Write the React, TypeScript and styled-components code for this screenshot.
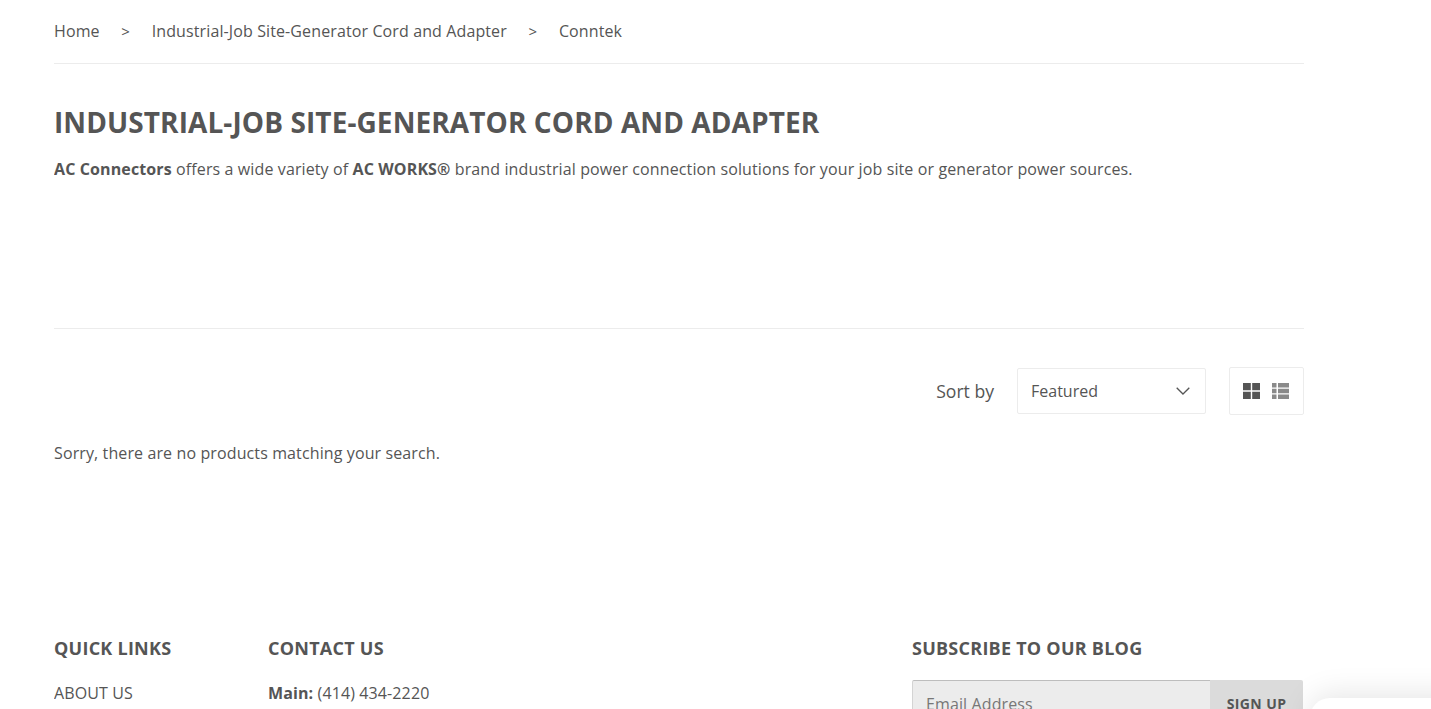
import React from "react";
import styled, { createGlobalStyle } from "styled-components";

const Global = createGlobalStyle`
  html, body { margin: 0; padding: 0; height: 709px; overflow: hidden; background: #fff; }
  body { font-family: "Open Sans", "Liberation Sans", sans-serif; font-size: 16px; line-height: 24px; color: #555; letter-spacing: 0.115px; }
`;
const Page = styled.div`
  width: 1250px;
  margin-left: 54px;
  height: 709px;
  overflow: hidden;
`;
const Breadcrumb = styled.nav`
  display: flex;
  align-items: center;
  height: 62px;
  padding-bottom: 1px;
  border-bottom: 1px solid #ececec;
`;
const Crumb = styled.span`
  color: #555;
  white-space: nowrap;
`;
const Sep = styled.span`
  width: 52px;
  text-align: center;
  font-size: 15px;
  line-height: 24px;
  color: #555;
`;
const Title = styled.h1`
  margin: 41px 0 0;
  font-size: 28px;
  line-height: 34px;
  font-weight: 700;
  letter-spacing: 0.09px;
  text-transform: uppercase;
  color: #555;
`;
const Desc = styled.p`
  margin: 18px 0 0;
  height: 147px;
  padding-bottom: 24px;
  border-bottom: 1px solid #ececec;
  b { font-weight: 700; }
`;
const Toolbar = styled.div`
  display: flex;
  justify-content: flex-end;
  align-items: center;
  margin-top: 38px;
  height: 48px;
`;
const SortLabel = styled.span`
  font-size: 17.6px;
  letter-spacing: 0;
  margin-right: 23px;
`;
const Select = styled.div`
  display: flex;
  align-items: center;
  justify-content: space-between;
  width: 189px;
  height: 46px;
  box-sizing: border-box;
  padding: 0 15px 0 13px;
  border: 1px solid #ececec;
  border-radius: 2px;
  margin-right: 23px;
  letter-spacing: 0;
`;
const Toggle = styled.div`
  display: flex;
  align-items: center;
  justify-content: center;
  gap: 12px;
  width: 75px;
  height: 48px;
  box-sizing: border-box;
  padding-right: 1px;
  border: 1px solid #ececec;
  border-radius: 2px;
`;
const Empty = styled.p`
  margin: 26px 0 0;
`;
const Footer = styled.footer`
  display: flex;
  margin-top: 171px;
`;
const LinksCol = styled.div`
  width: 214px;
`;
const ContactCol = styled.div`
  width: 644px;
`;
const SubscribeCol = styled.div`
  width: 391px;
`;
const FootTitle = styled.h4`
  margin: 0 0 21px;
  font-size: 18px;
  line-height: 24px;
  font-weight: 700;
  text-transform: uppercase;
  letter-spacing: 0.25px;
  color: #555;
`;
const FootItem = styled.div`
  b { font-weight: 700; }
`;
const Form = styled.div`
  display: flex;
  height: 48px;
  margin-top: -1px;
`;
const Input = styled.div`
  flex: 1;
  box-sizing: border-box;
  background: #ececec;
  border: 1px solid #d4d4d4;
  border-top-color: #bdbdbd;
  border-radius: 2px 0 0 2px;
  border-right: none;
  padding: 11px 13px;
  color: #777;
`;
const SignUp = styled.div`
  width: 93px;
  box-sizing: border-box;
  background: #dbdbdb;
  border-radius: 0 2px 2px 0;
  padding-top: 12px;
  text-align: center;
  font-weight: 700;
  font-size: 14px;
  letter-spacing: 0.4px;
  color: #555;
`;
const Popup = styled.div`
  position: fixed;
  left: 1310px;
  top: 698px;
  width: 160px;
  height: 80px;
  background: #fff;
  border-radius: 20px;
  box-shadow: 0 -4px 30px rgba(0, 0, 0, 0.1);
`;

export default function App() {
  return (
    <>
      <Global />
      <Page>
        <Breadcrumb>
          <Crumb>Home</Crumb>
          <Sep>&gt;</Sep>
          <Crumb>Industrial-Job Site-Generator Cord and Adapter</Crumb>
          <Sep>&gt;</Sep>
          <Crumb>Conntek</Crumb>
        </Breadcrumb>
        <Title>Industrial-Job Site-Generator Cord and Adapter</Title>
        <Desc>
          <b>AC Connectors</b> offers a wide variety of <b>AC WORKS®</b> brand industrial power connection solutions for your job site or generator power sources.
        </Desc>
        <Toolbar>
          <SortLabel>Sort by</SortLabel>
          <Select>
            Featured
            <svg width="14" height="8" viewBox="0 0 14 8" fill="none" stroke="#555" strokeWidth="1.3"><path d="M.7.7 7 7l6.300-6.300" /></svg>
          </Select>
          <Toggle>
            <svg width="17" height="16" viewBox="0 0 17 16" fill="#555"><path d="M0 0h7.800v7.300H0zM9.200 0H17v7.300H9.200zM0 8.700h7.800V16H0zM9.200 8.700H17V16H9.200z" /></svg>
            <svg width="17" height="16" viewBox="0 0 17 16" fill="#8a8a8a"><path d="M0 0h4.500v4.400H0zM6 0h11v4.400H6zM0 5.800h4.500v4.400H0zM6 5.800h11v4.400H6zM0 11.600h4.500V16H0zM6 11.600h11V16H6z" /></svg>
          </Toggle>
        </Toolbar>
        <Empty>Sorry, there are no products matching your search.</Empty>
        <Footer>
          <LinksCol>
            <FootTitle>Quick Links</FootTitle>
            <FootItem>ABOUT US</FootItem>
          </LinksCol>
          <ContactCol>
            <FootTitle>Contact Us</FootTitle>
            <FootItem><b>Main:</b> (414) 434-2220</FootItem>
          </ContactCol>
          <SubscribeCol>
            <FootTitle>Subscribe to our blog</FootTitle>
            <Form>
              <Input>Email Address</Input>
              <SignUp>SIGN UP</SignUp>
            </Form>
          </SubscribeCol>
        </Footer>
      </Page>
      <Popup />
    </>
  );
}
